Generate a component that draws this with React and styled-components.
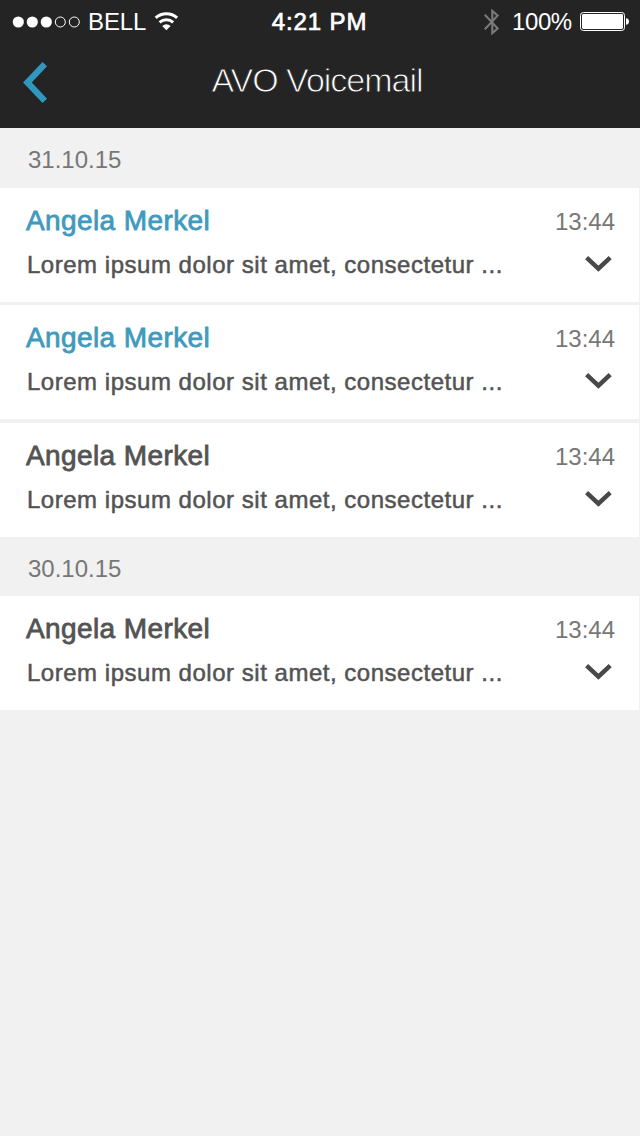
import React from 'react';
import styled, { createGlobalStyle } from 'styled-components';

const colors = {
  bar: '#242424',
  page: '#f1f1f1',
  accent: '#3f9abd',
  back: '#3097be',
  text: '#535353',
  muted: '#777777',
};

const days = [
  {
    date: '31.10.15',
    messages: [
      { id: 1, name: 'Angela Merkel', time: '13:44', unread: true, gap: 3 },
      { id: 2, name: 'Angela Merkel', time: '13:44', unread: true, gap: 4 },
      { id: 3, name: 'Angela Merkel', time: '13:44', unread: false },
    ],
  },
  {
    date: '30.10.15',
    compact: true,
    messages: [{ id: 4, name: 'Angela Merkel', time: '13:44', unread: false }],
  },
];

const SignalDots = () => (
  <svg width="70" height="14" viewBox="0 0 70 14">
    <circle cx="6.3" cy="7" r="5.6" fill="#fff" />
    <circle cx="20.3" cy="7" r="5.6" fill="#fff" />
    <circle cx="34.3" cy="7" r="5.6" fill="#fff" />
    <circle cx="48.3" cy="7" r="5" fill="none" stroke="#fff" />
    <circle cx="62.3" cy="7" r="5" fill="none" stroke="#fff" />
  </svg>
);

const WifiIcon = () => (
  <svg width="25" height="19" viewBox="0 0 25 19" fill="none" stroke="#fff">
    <path d="M1.7 5.8a16.3 16.3 0 0 1 21.4 0" strokeWidth="3.1" />
    <path d="M5.6 10.3a10.3 10.3 0 0 1 13.6 0" strokeWidth="3" />
    <path d="M12.4 18.2 8.2 13.9a6.4 6.4 0 0 1 8.4 0z" fill="#fff" stroke="none" />
  </svg>
);

const BluetoothIcon = () => (
  <svg width="16" height="28" viewBox="0 0 16 28" fill="none" stroke="#7a7a7a" strokeWidth="2.1">
    <path d="M0.8 6.8 13.6 20.4 8.3 25.2V2.8L13.6 7.6 0.8 21.2" />
  </svg>
);

const BatteryIcon = () => (
  <svg width="50" height="20" viewBox="0 0 50 20">
    <rect x="0.5" y="0.5" width="44" height="18" rx="2.8" fill="none" stroke="#fff" />
    <rect x="2" y="2" width="41" height="15" rx="1.4" fill="#fff" />
    <path d="M46 6.2c2 .2 3 1.5 3 3.3s-1 3.1-3 3.3z" fill="#fff" />
  </svg>
);

const BackIcon = () => (
  <svg width="26" height="42" viewBox="0 0 26 42" fill="none" stroke={colors.back} strokeWidth="6.3">
    <path d="M21.8 2.2 4.4 20.5 21.8 38.8" />
  </svg>
);

const ExpandIcon = () => (
  <svg width="28" height="17" viewBox="0 0 28 17" fill="none" stroke="#484848" strokeWidth="4.4">
    <path d="M1.6 1.6 13.4 12.7 25.2 1.6" />
  </svg>
);

const App = () => (
  <>
    <GlobalStyle />
    <Screen>
      <Header>
        <StatusBar>
          <StatusLeft>
            <SignalDots />
            <Carrier>BELL</Carrier>
            <WifiIcon />
          </StatusLeft>
          <Clock>4:21 PM</Clock>
          <StatusRight>
            <BluetoothIcon />
            <BatteryLevel>100%</BatteryLevel>
            <BatteryIcon />
          </StatusRight>
        </StatusBar>
        <NavBar>
          <BackButton aria-label="Back">
            <BackIcon />
          </BackButton>
          <Title>AVO Voicemail</Title>
        </NavBar>
      </Header>

      {days.map(day => (
        <section key={day.date}>
          <DateHeading $compact={day.compact}>{day.date}</DateHeading>
          {day.messages.map(message => (
            <Message key={message.id} $gap={message.gap}>
              <MessageBody>
                <Name $unread={message.unread}>{message.name}</Name>
                <Preview>Lorem ipsum dolor sit amet, consectetur ...</Preview>
              </MessageBody>
              <MessageSide>
                <Time>{message.time}</Time>
                <ExpandButton aria-label="Expand message">
                  <ExpandIcon />
                </ExpandButton>
              </MessageSide>
            </Message>
          ))}
        </section>
      ))}
    </Screen>
  </>
);

const GlobalStyle = createGlobalStyle`
  * {
    box-sizing: border-box;
  }

  body {
    margin: 0;
    background: ${colors.page};
    font-family: "Liberation Sans", Arial, sans-serif;
  }

  svg {
    display: block;
    flex-shrink: 0;
  }
`;

const Screen = styled.main`
  width: 640px;
  min-height: 1136px;
  background: ${colors.page};
`;

const Header = styled.header`
  height: 128px;
  background: ${colors.bar};
  color: white;
`;

const StatusBar = styled.div`
  display: grid;
  grid-template-columns: 1fr auto 1fr;
  align-items: center;
  height: 43px;
  padding: 0 10px 0 12px;
  font-size: 24px;
  line-height: 28px;
  white-space: nowrap;
`;

const StatusLeft = styled.div`
  display: flex;
  align-items: center;
`;

const StatusRight = styled.div`
  display: flex;
  align-items: center;
  justify-content: flex-end;
`;

const Carrier = styled.span`
  width: 72px;
  padding-left: 6px;
  letter-spacing: -0.1px;
`;

const Clock = styled.span`
  padding-right: 3px;
  letter-spacing: 0.9px;
  -webkit-text-stroke: 0.7px white;
`;

const BatteryLevel = styled.span`
  width: 60px;
  margin: 0 8px 0 12px;
  letter-spacing: -0.4px;
`;

const NavBar = styled.div`
  display: grid;
  grid-template-columns: 80px 1fr 80px;
  height: 85px;
`;

const BackButton = styled.button`
  display: flex;
  align-items: flex-start;
  padding: 19px 0 0 23px;
  border: none;
  background: none;
  cursor: pointer;
`;

/* the outline in the bar colour thins the strokes to a light weight */
const Title = styled.h1`
  margin: 0;
  padding: 17px 6px 0 0;
  font-size: 34px;
  font-weight: 400;
  line-height: 40px;
  letter-spacing: -1px;
  text-align: center;
  -webkit-text-stroke: 0.9px ${colors.bar};
`;

const DateHeading = styled.h2`
  height: ${({ $compact }) => ($compact ? '59px' : '60px')};
  margin: 0;
  padding: 17px 0 0 28px;
  color: ${colors.muted};
  font-size: 24px;
  font-weight: 400;
  line-height: 30px;
`;

const Message = styled.article`
  display: flex;
  justify-content: space-between;
  height: 114px;
  margin: 0 1px ${({ $gap }) => $gap || 0}px 0;
  padding: 16px 24px 0 26px;
  background: white;
`;

const MessageBody = styled.div`
  display: flex;
  flex-direction: column;
  gap: 12px;
`;

const Name = styled.h3`
  margin: 0;
  color: ${({ $unread }) => ($unread ? colors.accent : colors.text)};
  font-size: 28px;
  font-weight: 400;
  line-height: 34px;
  letter-spacing: 0.4px;
  -webkit-text-stroke: 0.8px currentColor;
`;

const Preview = styled.p`
  margin: 0;
  padding-left: 1px;
  color: ${colors.text};
  font-size: 24px;
  line-height: 30px;
  letter-spacing: 0.52px;
  white-space: nowrap;
  -webkit-text-stroke: 0.5px currentColor;
`;

const MessageSide = styled.div`
  display: flex;
  flex-direction: column;
  align-items: flex-end;
  padding-top: 3px;
`;

const Time = styled.time`
  color: ${colors.muted};
  font-size: 24px;
  line-height: 30px;
`;

const ExpandButton = styled.button`
  padding: 19px 2px 0 0;
  border: none;
  background: none;
  cursor: pointer;
`;

export default App;
